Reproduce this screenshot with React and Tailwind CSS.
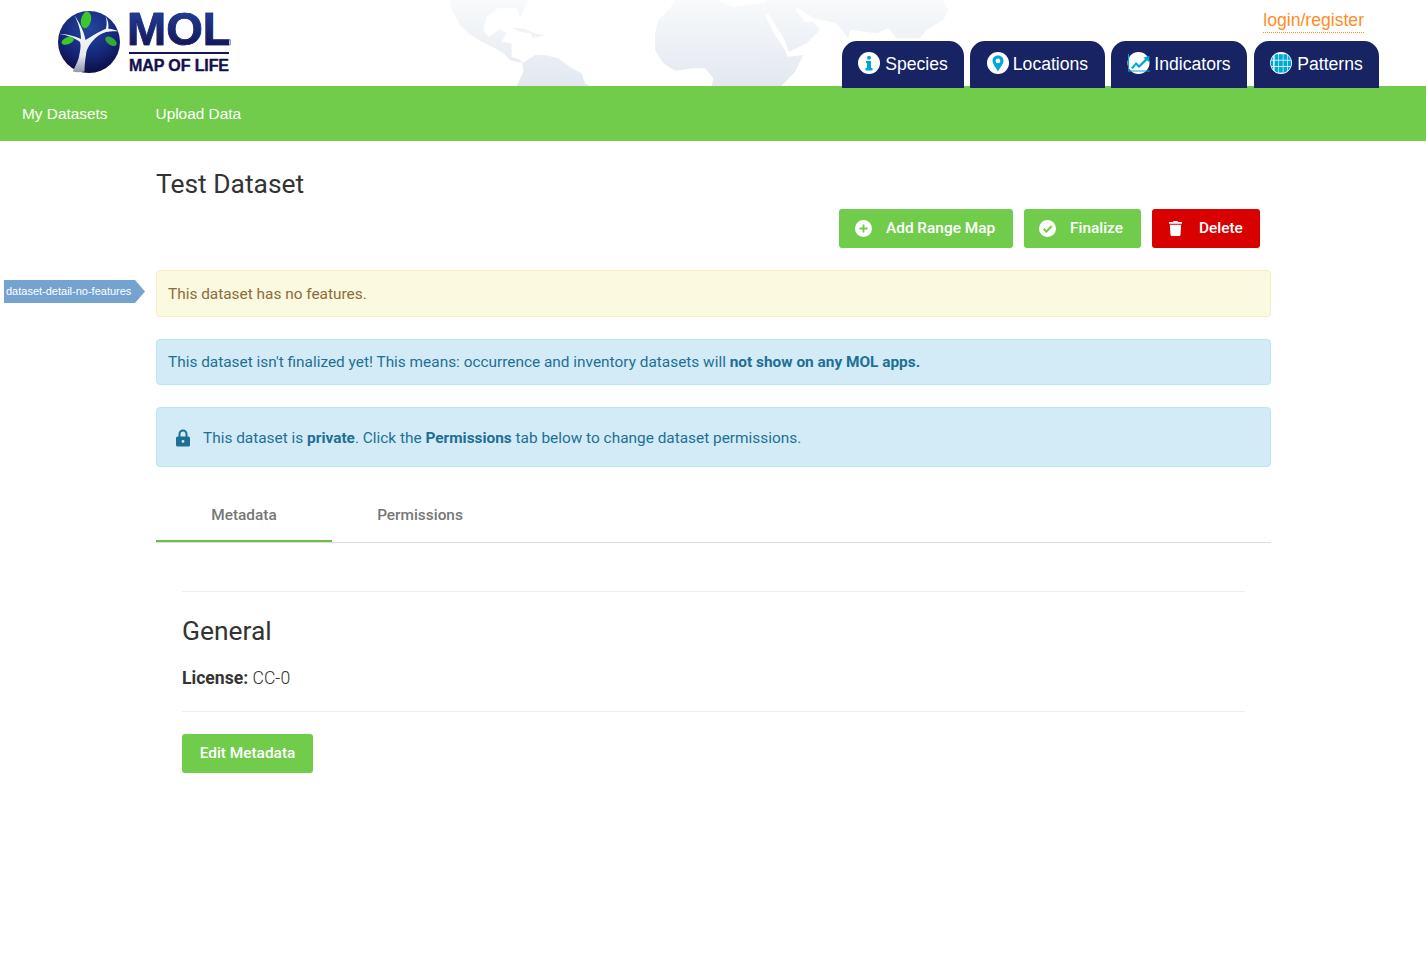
import React from "react";
import { FaTrash } from "react-icons/fa";

const sans = "font-['Liberation_Sans',Arial,sans-serif]";

function WorldMap() {
  return (
    <svg className="absolute left-[440px] top-0" width="520" height="86" viewBox="0 0 520 86" aria-hidden="true">
      <defs>
        <linearGradient id="land" gradientUnits="userSpaceOnUse" x1="0" y1="0" x2="0" y2="258">
          <stop offset="0" stopColor="#f8fafb" />
          <stop offset="1" stopColor="#e3e8f0" />
        </linearGradient>
      </defs>
      <g transform="translate(5 0) scale(0.3333)" fill="url(#land)">
        <path d="M15 0 L18 25 45 75 70 100 110 125 150 145 175 160 195 180 215 185 235 190 222 178 200 170 200 130 170 125 185 100 165 88 130 110 115 90 125 50 160 25 215 25 225 55 250 0 Z" />
        <path d="M200 85 L235 85 270 100 300 105 265 115 255 100 225 95 Z" />
        <path d="M215 258 L235 215 232 190 270 165 300 165 340 175 380 205 410 220 420 250 435 258 Z" />
      </g>
      <g transform="translate(210 0) scale(0.3333)" fill="url(#land)">
        <path d="M75 0 L60 25 25 60 15 100 15 150 40 190 75 212 130 205 165 205 190 235 185 258 L395 258 435 215 460 165 412 170 405 150 375 105 345 45 355 42 382 85 404 120 416 156 470 130 510 90 490 65 465 65 435 30 445 25 490 55 560 70 595 115 600 90 680 100 715 85 740 115 810 115 830 90 880 60 895 30 880 0 L350 0 345 8 250 20 200 0 Z" />
      </g>
    </svg>
  );
}

function Logo() {
  return (
    <div className="flex items-start gap-[9px]">
      <svg width="62" height="62" viewBox="0 0 62 62" className="mt-[11px] shrink-0" aria-hidden="true">
        <defs>
          <radialGradient id="globe" cx="0.5" cy="0.28" r="0.8">
            <stop offset="0" stopColor="#23469e" />
            <stop offset="0.55" stopColor="#15277a" />
            <stop offset="1" stopColor="#0b0632" />
          </radialGradient>
          <linearGradient id="trunk" x1="0" y1="0" x2="0" y2="1">
            <stop offset="0" stopColor="#ffffff" />
            <stop offset="0.7" stopColor="#e8e9ef" />
            <stop offset="1" stopColor="#9296ad" />
          </linearGradient>
        </defs>
        <circle cx="31" cy="31" r="31" fill="url(#globe)" />
        <path d="M14.7 60.5 C18 54 21 48 21.5 43 C22.5 38 23 34 22 31 C17 27 9 24 1.3 23 C9 23 17 25 23 28 C23 20 20 11 16.3 4.3 C21 11 26 20 27.5 29 C34 25 42 20 48 17.7 C49 13 49 9 47.3 5.3 C50 9 51 13 50.3 17.7 C54 18 58 19 61.3 20.3 C57 20 52 20 48 21 C41 23 36 28 33 32 C30 36 28 40 28 44 C27 50 26.5 55 26.5 60.5 C22 61.5 18 61.5 14.7 60.5 Z" fill="url(#trunk)" />
        <ellipse cx="28" cy="9" rx="5" ry="8.5" transform="rotate(12 28 9)" fill="#3fc62f" />
        <ellipse cx="9.7" cy="29.7" rx="6.5" ry="3.5" transform="rotate(-22 9.7 29.7)" fill="#3fc62f" />
        <ellipse cx="53" cy="30.3" rx="6.5" ry="3.6" transform="rotate(35 53 30.3)" fill="#34a93a" />
      </svg>
      <div className="flex w-[100px] flex-col">
        <div className={"-ml-[2px] mt-[6px] h-[45px] whitespace-nowrap bg-gradient-to-b from-[#2444a0] to-[#12104f] bg-clip-text text-[47px] font-bold leading-[45px] text-transparent [-webkit-text-stroke:0.7px_#1b2a7b] " + sans}>MOL</div>
        <div className="mt-[1px] h-[2px] bg-[#14145a]" />
        <div className={"mt-[3px] whitespace-nowrap text-[16px] font-bold leading-[18px] tracking-[-0.1px] text-[#14104f] [-webkit-text-stroke:0.4px_#14104f] " + sans}>MAP OF LIFE</div>
      </div>
    </div>
  );
}

function IconCircle({ children }) {
  return (
    <svg width="22" height="22" viewBox="0 0 22 22" className="shrink-0" aria-hidden="true">
      <circle cx="11" cy="11" r="11" fill="#fff" />
      {children}
    </svg>
  );
}

const SpeciesIcon = () => (
  <IconCircle>
    <circle cx="11" cy="5.8" r="2" fill="#00a8d8" />
    <path d="M8 9 H13 V16 H14.5 V18.5 H7.5 V16 H9 V11.2 H8 Z" fill="#00a8d8" />
  </IconCircle>
);
const LocationIcon = () => (
  <IconCircle>
    <path fillRule="evenodd" d="M11 3.5 C7.7 3.5 5.5 5.9 5.5 8.8 C5.5 12 9 16 11 19.5 C13 16 16.5 12 16.5 8.8 C16.5 5.9 14.3 3.5 11 3.5 Z M11 6.5 A2.4 2.4 0 1 1 11 11.3 A2.4 2.4 0 1 1 11 6.5 Z" fill="#00a8d8" />
  </IconCircle>
);
const IndicatorIcon = () => (
  <svg width="23" height="22" viewBox="0 0 23 22" className="shrink-0" aria-hidden="true">
    <circle cx="11.5" cy="11" r="11" fill="#fff" />
    <path d="M1 2 V19.5 H23 V18.5 H2 V2 Z" fill="#00a8d8" />
    <path d="M4 16 L9 10 L12 13 L18 7 L16.5 5.5 L22.5 4 L22 10 L20 8.5 L12 16 L9 13 L6 17 Z" fill="#00a8d8" />
  </svg>
);
const PatternIcon = () => (
  <IconCircle>
    <defs>
      <clipPath id="pc"><circle cx="11" cy="11" r="10.4" /></clipPath>
    </defs>
    <g clipPath="url(#pc)" fill="#00a8d8">
      {[2.2, 8.6, 15].flatMap((y) =>
        [-0.6, 4.6, 9, 13.4, 17.8].map((x) => <rect key={x + "-" + y} x={x} y={y} width="3.8" height="5.6" />)
      )}
    </g>
  </IconCircle>
);

const LockIcon = () => (
  <svg width="14" height="18" viewBox="0 0 14 18" className="mb-[2px] shrink-0" aria-hidden="true">
    <path d="M3.5 8 V5 A3.5 3.5 0 0 1 10.5 5 V8" fill="none" stroke="currentColor" strokeWidth="2" />
    <path fillRule="evenodd" d="M1.5 7.5 H12.5 A1.5 1.5 0 0 1 14 9 V16 A1.5 1.5 0 0 1 12.5 17.5 H1.5 A1.5 1.5 0 0 1 0 16 V9 A1.5 1.5 0 0 1 1.5 7.5 Z M7 11 A1.4 1.4 0 1 0 7 13.8 A1.4 1.4 0 1 0 7 11 Z" fill="currentColor" />
  </svg>
);

const PlusIcon = () => (
  <svg width="17" height="17" viewBox="0 0 17 17" aria-hidden="true">
    <circle cx="8.5" cy="8.5" r="8.5" fill="#fff" />
    <path d="M8.5 4.5 V12.5 M4.5 8.5 H12.5" stroke="#72cc4b" strokeWidth="1.8" />
  </svg>
);
const CheckIcon = () => (
  <svg width="17" height="17" viewBox="0 0 17 17" aria-hidden="true">
    <circle cx="8.5" cy="8.5" r="8.5" fill="#fff" />
    <path d="M4.6 8.8 L7.4 11.6 L12.6 6" fill="none" stroke="#72cc4b" strokeWidth="2" />
  </svg>
);

function NavTab({ icon, label, className }) {
  return (
    <a className={"flex h-[47px] items-start justify-center rounded-t-[15px] bg-[#172363] pt-[11px] text-[17.6px] leading-[22px] text-white " + sans + " " + className}>
      {icon}
      <span className="mt-[1px]">{label}</span>
    </a>
  );
}

function ActionButton({ icon, label, className }) {
  return (
    <button className={"flex h-[39px] items-center rounded-[3px] text-[15.4px] font-medium text-white " + className}>
      {icon}
      <span>{label}</span>
    </button>
  );
}

export default function App() {
  return (
    <div className="relative min-h-[976px] bg-white font-['Roboto',sans-serif] text-[#333]">
      <header className="relative flex h-[86px] items-start justify-between pl-[58px] pr-[47px]">
        <WorldMap />
        <div className="relative">
          <Logo />
        </div>
        <div className="relative flex h-[88px] flex-col items-end">
          <a className={"mr-[15px] mt-[9px] border-b border-dotted border-[#ff8c1a] pb-[1px] text-[17.6px] leading-[22px] text-[#ff8c26] " + sans}>login/register</a>
          <nav className="mt-[8px] flex gap-[6px]">
            <NavTab icon={<SpeciesIcon />} label="Species" className="w-[122px] gap-[5px]" />
            <NavTab icon={<LocationIcon />} label="Locations" className="w-[135px] gap-[4px]" />
            <NavTab icon={<IndicatorIcon />} label="Indicators" className="w-[136px] gap-[4px]" />
            <NavTab icon={<PatternIcon />} label="Patterns" className="ml-[1px] w-[125px] gap-[5px]" />
          </nav>
        </div>
      </header>

      <div className={"flex h-[55px] items-center gap-[48px] bg-[#72cc4b] pl-[22px] pt-[1px] text-[15.4px] text-white " + sans}>
        <a>My Datasets</a>
        <a>Upload Data</a>
      </div>

      <main className="relative ml-[156px] w-[1115px] pt-[26px]">
        <h1 className="pt-[1px] text-[26.4px] font-normal leading-[33px] text-[#333]">Test Dataset</h1>

        <div className="mt-[8px] flex justify-end gap-[11px] pr-[11px]">
          <ActionButton className="w-[174px] gap-[14px] pl-[16px] bg-[#72cc4b]" icon={<PlusIcon />} label="Add Range Map" />
          <ActionButton className="w-[117px] gap-[14px] pl-[15px] bg-[#72cc4b]" icon={<CheckIcon />} label="Finalize" />
          <ActionButton className="w-[108px] gap-[16px] pl-[16px] bg-[#d90000]" icon={<FaTrash className="h-[15px] w-[15px]" />} label="Delete" />
        </div>

        <div className="mt-[22px] flex flex-col gap-[22px] text-[15.4px]">
          <div className="relative flex h-[47px] items-center rounded-[4px] border border-[#f8ecc8] bg-[#fbf9e0] px-[11px] pt-[3px] text-[#8a6d3b]">
            This dataset has no features.
            <div className={"absolute left-[-153px] top-[9px] flex h-[23px] w-[141px] items-center pl-[2px] text-[11px] text-white [clip-path:polygon(0_0,131px_0,100%_50%,131px_100%,0_100%)] bg-[#74a3cf] " + sans}>
              dataset-detail-no-features
            </div>
          </div>
          <div className="flex h-[46px] items-center rounded-[4px] border border-[#b5e6f2] bg-[#d2ebf7] px-[11px] pt-[2px] text-[#1f6f94]">
            <span>
              This dataset isn't finalized yet! This means: occurrence and inventory datasets will <b className="font-bold">not show on any MOL apps.</b>
            </span>
          </div>
          <div className="flex h-[60px] items-center gap-[13px] rounded-[4px] border border-[#b5e6f2] bg-[#d2ebf7] pl-[19px] pt-[3px] text-[#1f6f94]">
            <LockIcon />
            <span>
              This dataset is <b className="font-bold">private</b>. Click the <b className="font-bold">Permissions</b> tab below to change dataset permissions.
            </span>
          </div>
        </div>

        <div className="mt-[24px] flex h-[52px] border-b border-[#dddddd] text-[15.4px] font-medium text-[#777]">
          <a className="flex h-[51px] w-[176px] items-center justify-center border-b-2 border-[#6cbf45] pt-[1px]">Metadata</a>
          <a className="flex h-[51px] w-[176px] items-center justify-center border-b-2 border-transparent pt-[1px]">Permissions</a>
        </div>

        <section className="mx-[26px] mt-[48px]">
          <div className="border-t border-[#eeeeee] pt-[21px]">
            <h2 className="text-[26.4px] font-normal leading-[36px] text-[#333]">General</h2>
            <p className="mt-[17px] text-[17.6px] leading-[24px] font-light text-[#333]">
              <b className="font-bold">License:</b> CC-0
            </p>
          </div>
          <div className="mt-[21px] border-t border-[#eeeeee] pt-[22px]">
            <button className="flex h-[39px] w-[131px] items-center justify-center rounded-[3px] bg-[#72cc4b] text-[15.4px] font-medium text-white">
              Edit Metadata
            </button>
          </div>
        </section>
      </main>
    </div>
  );
}
